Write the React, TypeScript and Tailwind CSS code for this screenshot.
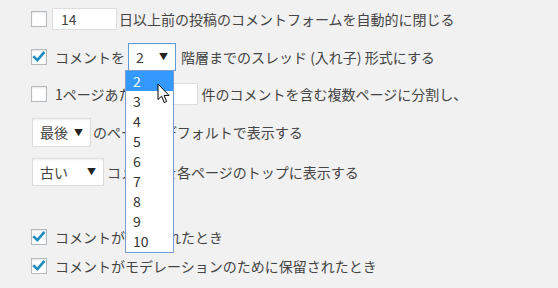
import React from "react";

const font = { fontFamily: '"Segoe UI", "Noto Sans CJK JP", "Noto Sans", sans-serif' };

function Box({ checked }: { checked?: boolean }) {
  return (
    <span className="relative w-[16px] h-[16px] shrink-0 border border-[#b4b9be] bg-white shadow-[inset_0_1px_2px_rgba(0,0,0,0.1)]">
      {checked && (
        <svg viewBox="0 0 16 16" className="absolute left-[-1px] top-[-1px] w-[16px] h-[16px]">
          <path d="M3.2 8.2 L6.4 11.2 L12.6 3.8" fill="none" stroke="#1e8cbe" strokeWidth="2.6" strokeLinecap="square" />
        </svg>
      )}
    </span>
  );
}

function Sel({ label, w, focus }: { label: string; w: string; focus?: boolean }) {
  return (
    <span
      className={`flex items-center justify-between h-full bg-white px-[7px] shadow-[inset_0_1px_2px_rgba(0,0,0,0.07)] ${w} ${
        focus ? "border border-[#5b9dd9]" : "border border-[#ddd]"
      }`}
    >
      <span>{label}</span>
      <span className="text-[9px] text-[#222]">▼</span>
    </span>
  );
}

export default function App() {
  const items = ["2", "3", "4", "5", "6", "7", "8", "9", "10"];
  return (
    <div className="relative w-[558px] h-[288px] bg-[#f1f1f1] text-[#444] text-[14px] overflow-hidden" style={font}>
      <div className="flex flex-col pl-[31px]">
        <div className="flex items-center h-[22px] mt-[8px]">
          <Box />
          <span className="w-[65px] h-full ml-[5px] bg-white border border-[#ddd] pl-[8px] leading-[20px]">14</span>
          <span className="ml-[2px]">日以上前の投稿のコメントフォームを自動的に閉じる</span>
        </div>
        <div className="flex items-center h-[28px] mt-[13px]">
          <Box checked />
          <span className="ml-[8px]">コメントを</span>
          <span className="ml-[3px] h-full">
            <Sel label="2" w="w-[48px]" focus />
          </span>
          <span className="ml-[5px]">階層までのスレッド (入れ子) 形式にする</span>
        </div>
        <div className="flex items-center h-[22px] mt-[12px]">
          <Box />
          <span className="ml-[8px]">1ページあたり</span>
          <span className="w-[50px] h-full ml-[1px] bg-white border border-[#ddd]" />
          <span className="ml-[4px]">件のコメントを含む複数ページに分割し、</span>
        </div>
        <div className="flex items-center h-[29px] mt-[13px]">
          <span className="h-full ml-[1px]">
            <Sel label="最後" w="w-[59px]" />
          </span>
          <span className="ml-[2px]">のページをデフォルトで表示する</span>
        </div>
        <div className="flex items-center h-[28px] mt-[11px]">
          <span className="h-full ml-[1px]">
            <Sel label="古い" w="w-[72px]" />
          </span>
          <span className="ml-[3px]">コメントを各ページのトップに表示する</span>
        </div>
        <div className="flex items-center h-[22px] mt-[40px]">
          <Box checked />
          <span className="ml-[8px]">コメントが投稿されたとき</span>
        </div>
        <div className="flex items-center h-[22px] mt-[7px]">
          <Box checked />
          <span className="ml-[8px]">コメントがモデレーションのために保留されたとき</span>
        </div>
      </div>

      <div className="absolute left-[125px] top-[70px] w-[49px] bg-white border border-[#7a9cd3] flex flex-col pb-[1px]">
        {items.map((it, i) => (
          <div
            key={it}
            className={`h-[20px] leading-[20px] pl-[7px] ${i === 0 ? "bg-[#3399ff] text-white" : "text-[#333]"}`}
          >
            {it}
          </div>
        ))}
      </div>

      <svg className="absolute left-[157px] top-[83px]" width="14" height="22" viewBox="0 0 14 22">
        <path
          d="M1 1 L1 16.5 L4.6 13.2 L7.2 19.5 L9.6 18.5 L7.1 12.4 L12 12.4 Z"
          fill="#fff"
          stroke="#000"
          strokeWidth="1"
          strokeLinejoin="round"
        />
      </svg>
    </div>
  );
}
